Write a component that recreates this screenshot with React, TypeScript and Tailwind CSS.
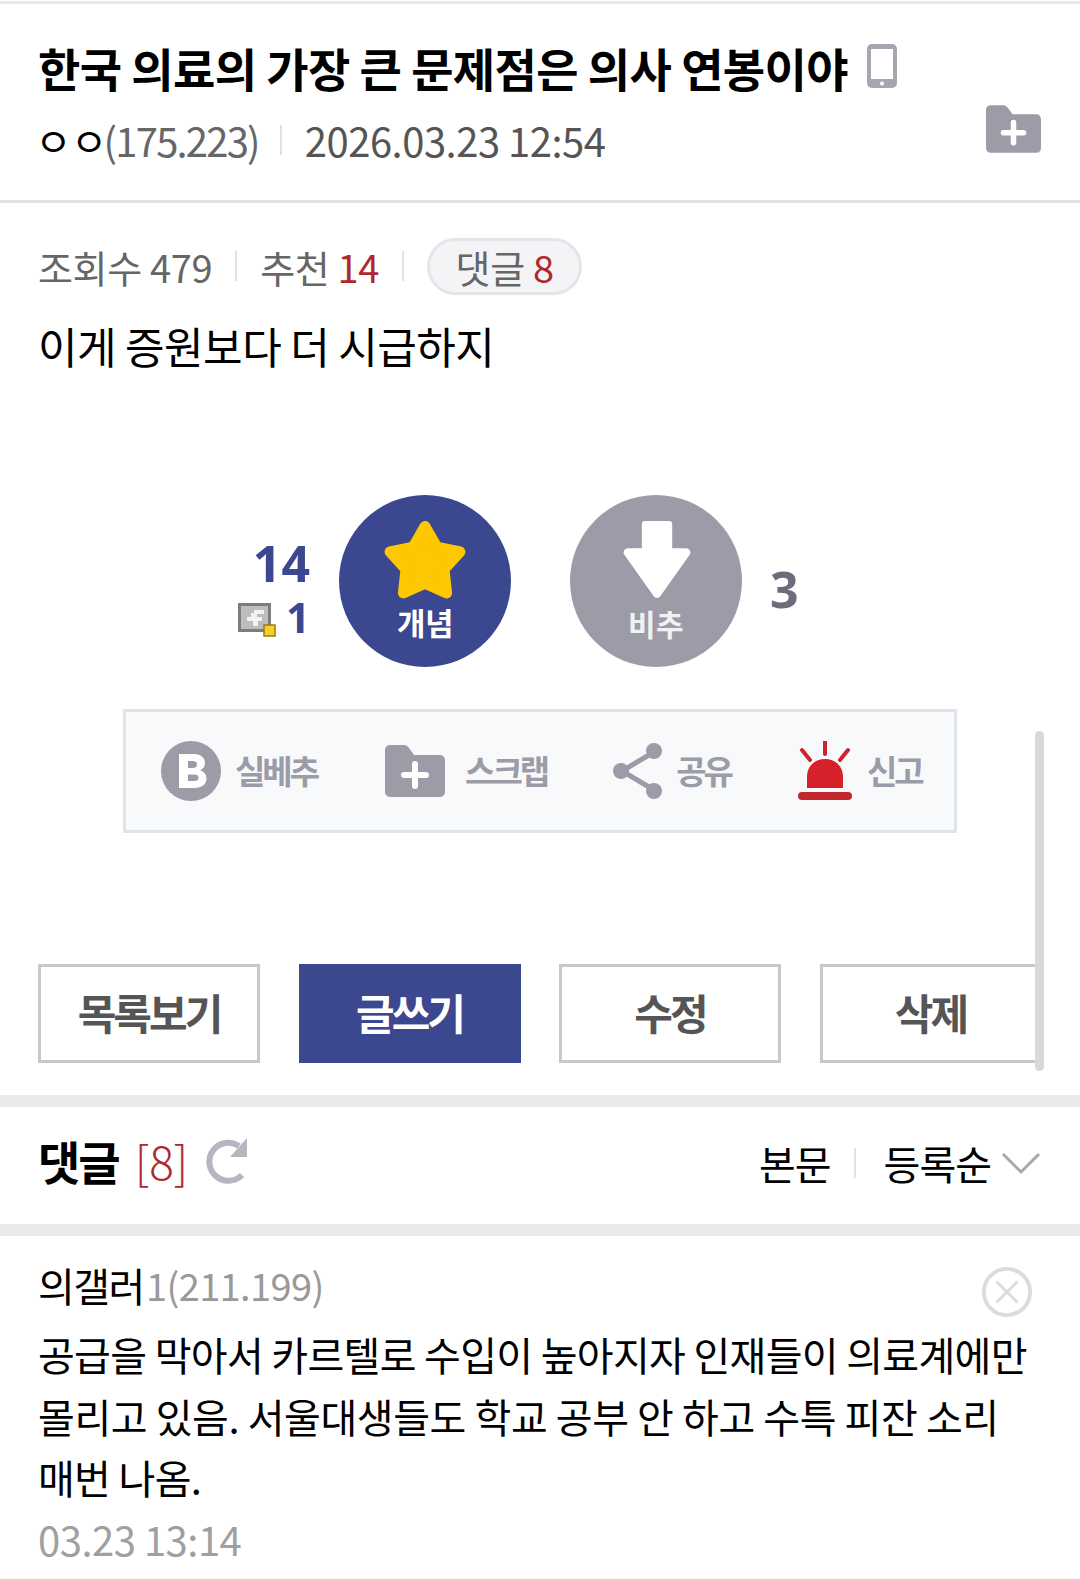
const KR = "font-['Noto_Sans_CJK_KR','Noto_Sans',sans-serif]";

const FolderPlus = ({ className }: { className: string }) => (
  <svg viewBox="0 0 60 52" className={className}>
    <path d="M0 5a5 5 0 0 1 5-5h14a6 6 0 0 1 5 3l5 7h26a5 5 0 0 1 5 5v32a5 5 0 0 1-5 5H5a5 5 0 0 1-5-5z" fill="#9b9ca8" />
    <path d="M30 19v22M19 30h22" stroke="#fff" strokeWidth="6" strokeLinecap="round" />
  </svg>
);

const ActionItem = ({ icon, label, gap }: { icon: React.ReactNode; label: string; gap: string }) => (
  <div className={`flex items-center ${gap}`}>
    {icon}
    <span className="text-[33px] font-bold tracking-[-3px] text-[#9b9ca8]">{label}</span>
  </div>
);

const OutlineButton = ({ label }: { label: string }) => (
  <button className="flex h-[99px] w-[222px] shrink-0 items-center justify-center border-[3px] border-[#c8c8c8] bg-white pb-[4px] text-[42px] font-bold tracking-[-3px] text-[#555]">
    {label}
  </button>
);

export default function App() {
  return (
    <div className={`relative h-[1579px] w-[1080px] overflow-hidden bg-white ${KR}`}>
      <div className="mt-[1px] h-[3px] bg-[#e9e9ec]" />

      {/* 글 제목 */}
      <header className="relative h-[196px] pl-[38px] pt-[28px]">
        <h1 className="flex items-center text-[46px] font-bold leading-[70px] tracking-[-0.6px] text-black">
          한국 의료의 가장 큰 문제점은 의사 연봉이야
          <svg viewBox="0 0 30 44" className="mb-[3px] ml-[19px] h-[44px] w-[30px]">
            <rect x="0" y="0" width="30" height="44" rx="5" fill="#a5a6b1" />
            <rect x="4" y="5" width="22" height="30" fill="#fff" />
            <circle cx="15" cy="39.500" r="2" fill="#fff" />
          </svg>
        </h1>
        <div className="mt-[3px] flex items-center text-[40px] leading-[70px] text-[#555]">
          <span className="-ml-[3px] tracking-[-1px] text-black">ㅇㅇ</span>
          <span className="-ml-[3px] tracking-[-1.8px] text-[#666]">(175.223)</span>
          <span className="ml-[21px] mr-[23px] h-[30px] w-[2px] bg-[#e2e2e6]" />
          <span className="tracking-[-0.5px]">2026.03.23 12:54</span>
        </div>
        <FolderPlus className="absolute right-[39px] top-[101px] h-[48px] w-[55px]" />
      </header>
      <div className="h-[3px] bg-[#e4e4e4]" />

      {/* 조회수 */}
      <div className="flex h-[93px] items-center pl-[38px] pt-[33px] text-[38px] tracking-[-0.35px] text-[#666]">
        <span>조회수 479</span>
        <span className="mx-[23px] block h-[30px] w-[2px] bg-[#e2e2e6]" />
        <span>추천 <span className="text-[#b0282e]">14</span></span>
        <span className="mx-[23px] block h-[30px] w-[2px] bg-[#e2e2e6]" />
        <span className="flex h-[57px] w-[155px] items-center justify-center rounded-full border-[3px] border-[#e4e4ea] bg-[#f4f4f6]">
          댓글&nbsp;<span className="text-[#b0282e]">8</span>
        </span>
      </div>

      <p className="mt-[18px] h-[181px] pl-[38px] text-[43px] leading-[62px] tracking-[-0.55px] text-black">이게 증원보다 더 시급하지</p>

      {/* 추천 */}
      <div className="flex h-[172px] items-center pl-[238px]">
        <div className="flex w-[72px] flex-col items-end pt-[16px] font-['Noto_Sans',sans-serif] font-bold text-[#3b4890]">
          <span className="text-[50px] leading-[56px]">14</span>
          <span className="flex items-center gap-[10px] text-[42px] leading-[52px]">
            <svg viewBox="0 0 38 34" className="mt-[6px] h-[34px] w-[38px]">
              <rect x="0" y="0" width="33" height="29" fill="#7d7d7d" />
              <rect x="3" y="3" width="27" height="23" fill="#bdbdbd" />
              <path d="M8 23h7v-5h-6v-4h4v-4h3v-3h10v4h-7v3h5v4h-4v5h-12z" fill="#f2f2f2" />
              <rect x="26" y="22" width="11" height="11" fill="#f5cf2e" stroke="#9b7d10" strokeWidth="1.500" />
            </svg>
            1
          </span>
        </div>
        <div className="ml-[29px] flex h-[172px] w-[172px] flex-col items-center rounded-full bg-[#3b4890]">
          <svg viewBox="3 1 74 72" className="mt-[26px] h-[78px] w-[82px]">
            <path d="M40 6L50.900 25 72.300 29.500 57.600 45.700 60 67.500 40 58.500 20 67.500 22.400 45.700 7.700 29.500 29.100 25z" fill="#fdc800" stroke="#fdc800" strokeWidth="10" strokeLinejoin="round" />
          </svg>
          <span className="mt-[4px] text-[31px] font-bold leading-[38px] tracking-[-0.5px] text-white">개념</span>
        </div>
        <div className="ml-[59px] flex h-[172px] w-[172px] flex-col items-center rounded-full bg-[#9c9ca8]">
          <svg viewBox="2 3 66 77" className="mt-[26px] h-[78px] w-[70px]">
            <path d="M22 3h26a3 3 0 0 1 3 3v24h14a4 4 0 0 1 3.400 6l-29 41a4 4 0 0 1-6.800 0l-29-41a4 4 0 0 1 3.400-6h14V6a3 3 0 0 1 3-3z" fill="#fff" />
          </svg>
          <span className="mt-[5px] text-[30px] font-bold leading-[38px] tracking-[0.3px] text-[#f1f1f4]">비추</span>
        </div>
        <span className="ml-[28px] mt-[16px] font-['Noto_Sans',sans-serif] text-[50px] font-bold text-[#6c6c7a]">3</span>
      </div>

      {/* 실베추 스크랩 공유 신고 */}
      <div className="ml-[123px] mt-[42px] flex h-[124px] w-[834px] items-center border-[3px] border-[#e0e3ea] bg-[#f8f9fb] pl-[35px]">
        <ActionItem
          gap="gap-[14px]"
          label="실베추"
          icon={
            <svg viewBox="0 0 60 60" className="h-[60px] w-[60px]">
              <circle cx="30" cy="30" r="30" fill="#9b9ca8" />
              <path d="M18 13h15c7 0 11 4 11 9 0 3.500-2 6-5 7.300 4 1.200 6.500 4 6.500 8.200 0 6-5 9.500-12 9.500H18zM27 20v7h5c2.500 0 4-1.300 4-3.500S34.500 20 32 20zM27 33.500V40h6c3 0 4.500-1.300 4.500-3.300s-1.500-3.200-4.500-3.200z" fill="#fff" fillRule="evenodd" />
            </svg>
          }
        />
        <div className="ml-[68px]">
          <ActionItem gap="gap-[20px]" label="스크랩" icon={<FolderPlus className="h-[54px] w-[60px]" />} />
        </div>
        <div className="ml-[66px]">
          <ActionItem
            gap="gap-[13px]"
            label="공유"
            icon={
              <svg viewBox="0 0 50 56" className="h-[56px] w-[50px]">
                <path d="M41 9L9 28l32 19" fill="none" stroke="#9b9ca8" strokeWidth="5" />
                <circle cx="41" cy="8" r="8" fill="#9b9ca8" />
                <circle cx="8" cy="28" r="8" fill="#9b9ca8" />
                <circle cx="41" cy="48" r="8" fill="#9b9ca8" />
              </svg>
            }
          />
        </div>
        <div className="ml-[67px]">
          <ActionItem
            gap="gap-[15px]"
            label="신고"
            icon={
              <svg viewBox="0 0 54 60" className="h-[60px] w-[54px]">
                <path d="M27 1v12M4 9l8 10M50 9l-8 10" stroke="#c9252b" strokeWidth="4" strokeLinecap="round" />
                <path d="M9 47V36C9 25 17 18 27 18s18 7 18 18v11z" fill="#d6202a" />
                <rect x="0" y="51" width="54" height="8" rx="4" fill="#c1272d" />
              </svg>
            }
          />
        </div>
      </div>

      {/* 버튼 */}
      <div className="mt-[131px] flex h-[99px] w-[1036px] gap-[38.500px] overflow-hidden pl-[38px]">
        <OutlineButton label="목록보기" />
        <button className="flex h-[99px] w-[222px] shrink-0 items-center justify-center bg-[#3b4890] pb-[4px] text-[42px] font-bold tracking-[-3px] text-white">
          글쓰기
        </button>
        <OutlineButton label="수정" />
        <OutlineButton label="삭제" />
      </div>

      <div className="mt-[32px] h-[12px] bg-[#e9eaee]" />

      {/* 댓글 헤더 */}
      <div className="flex h-[117px] items-center justify-between pb-[6px] pl-[38px] pr-[39px]">
        <div className="flex items-center">
          <span className="mb-[4px] text-[46px] font-bold tracking-[-2px] text-black">댓글</span>
          <span className="mb-[4px] ml-[16px] text-[46px] font-light text-[#b0282e]">[8]</span>
          <svg viewBox="0 0 46 46" className="mb-[4px] ml-[17px] h-[46px] w-[46px]">
            <path d="M37 37a19 19 0 1 1-3-29" fill="none" stroke="#b4b6c0" strokeWidth="6" />
            <path d="M42 0v19H25z" fill="#b4b6c0" />
          </svg>
        </div>
        <div className="flex items-center text-[40px] tracking-[-1px] text-black">
          <span>본문</span>
          <span className="ml-[23px] mr-[28px] h-[30px] w-[2px] bg-[#e2e2e6]" />
          <span>등록순</span>
          <svg viewBox="0 0 40 24" className="ml-[10px] h-[24px] w-[40px]">
            <path d="M2 3l18 18L38 3" fill="none" stroke="#a8a8b0" strokeWidth="3" />
          </svg>
        </div>
      </div>

      <div className="h-[12px] bg-[#e9eaee]" />

      {/* 댓글 */}
      <div className="relative px-[38px] pt-[18px]">
        <div className="flex items-center text-[40px] leading-[62px]">
          <span className="tracking-[-1.5px] text-black">의갤러</span>
          <span className="ml-[2px] text-[38px] tracking-[-0.6px] text-[#999]">1(211.199)</span>
        </div>
        <svg viewBox="0 0 52 52" className="absolute right-[48px] top-[31px] h-[50px] w-[50px]">
          <circle cx="26" cy="26" r="24" fill="none" stroke="#dcdcdc" strokeWidth="4" />
          <path d="M15 15l22 22M37 15L15 37" stroke="#dcdcdc" strokeWidth="3" />
        </svg>
        <p className="mt-[8px] text-[40px] leading-[61.500px] tracking-[-0.68px] text-black">
          공급을 막아서 카르텔로 수입이 높아지자 인재들이 의료계에만
          <br />
          <span className="tracking-[-0.42px]">몰리고 있음. 서울대생들도 학교 공부 안 하고 수특 피잔 소리</span>
          <br />
          매번 나옴.
        </p>
        <div className="text-[40px] leading-[60px] tracking-[-0.5px] text-[#a0a0a0]">03.23 13:14</div>
      </div>

      {/* 스크롤바 */}
      <div className="absolute left-[1035px] top-[731px] h-[340px] w-[9px] rounded-full bg-[#d9d9d9]" />
    </div>
  );
}
